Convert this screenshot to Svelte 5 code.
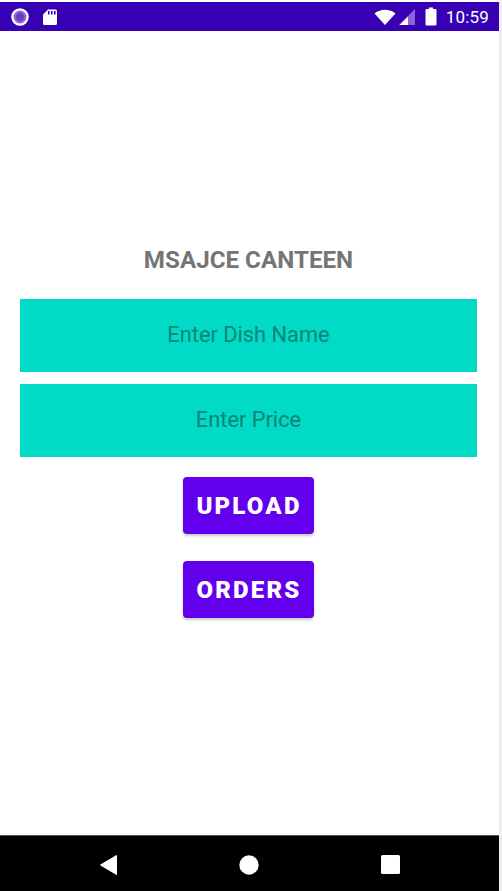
<script>
  const fields = ['Enter Dish Name', 'Enter Price'];
  const actions = ['UPLOAD', 'ORDERS'];
</script>

<div class="screen">
  <header class="status">
    <div class="left">
      <svg width="20" height="20" viewBox="0 0 20 20"><circle cx="10" cy="10" r="7.6" fill="#8a66d8" stroke="#fff" stroke-width="2.4"/><circle cx="10" cy="10" r="4.2" fill="#6a3cc4"/></svg>
      <svg width="16" height="18" viewBox="0 0 16 18"><path d="M6 1.5H13.5A1.5 1.5 0 0 1 15 3V15.5A1.5 1.5 0 0 1 13.5 17H2.5A1.5 1.5 0 0 1 1 15.5V6.5Z" fill="#fff"/><path d="M6 3h1.6v3.4H6zM9 3h1.6v3.4H9zM12 3h1.6v3.4H12z" fill="#3700b3"/></svg>
    </div>
    <div class="right">
      <svg class="wifi" width="22" height="16" viewBox="0 0 22 16"><path d="M0.5 4.5C6.5 -0.5 15.5 -0.5 21.5 4.5L11 16Z" fill="#fff"/></svg>
      <svg width="18" height="18" viewBox="0 0 18 18"><path d="M17 1V17H1Z" fill="#8a66d8"/><path d="M10 8.5V17H1.5Z" fill="#fff"/></svg>
      <svg class="batt" width="12" height="19" viewBox="0 0 12 19"><path d="M4 0.5H8V2H10.5A1 1 0 0 1 11.5 3V17.5A1 1 0 0 1 10.5 18.5H1.5A1 1 0 0 1 0.5 17.5V3A1 1 0 0 1 1.5 2H4Z" fill="#fff"/></svg>
      <span class="time">10:59</span>
    </div>
  </header>

  <main class="content">
    <h1>MSAJCE CANTEEN</h1>
    {#each fields as f}
      <div class="field"><span>{f}</span></div>
    {/each}
    {#each actions as a}
      <button>{a}</button>
    {/each}
  </main>

  <nav class="nav">
    <svg width="18" height="20" viewBox="0 0 18 20"><path d="M16.5 0.5V19.5L0.5 10Z" fill="#fff" stroke="#fff" stroke-linejoin="round"/></svg>
    <svg width="20" height="20" viewBox="0 0 20 20"><circle cx="10" cy="10" r="9.7" fill="#fff"/></svg>
    <svg width="19" height="19" viewBox="0 0 19 19"><rect width="19" height="19" rx="1.5" fill="#fff"/></svg>
  </nav>
</div>

<style>
  :global(body) {
    margin: 0;
    background: #fff;
  }
  .screen {
    width: 499px;
    height: 891px;
    display: flex;
    flex-direction: column;
    overflow: hidden;
    font-family: Roboto, sans-serif;
    border-right: 3px solid #eeeeee;
  }
  .status {
    height: 29px;
    margin-top: 2px;
    background: #3700b3;
    display: flex;
    justify-content: space-between;
    align-items: center;
    padding: 0 10px 0 10px;
    color: #fff;
  }
  .left, .right {
    display: flex;
    align-items: center;
  }
  .left { gap: 12px; }
  .right { gap: 1px; }
  .wifi { margin-right: 1px; }
  .batt { margin-left: 8px; }
  .time {
    margin-left: 8px;
    font-size: 17px;
    letter-spacing: 0.2px;
  }
  .content {
    flex: 1;
    display: flex;
    flex-direction: column;
    align-items: center;
    padding: 215.5px 22px 0 20px;
  }
  h1 {
    margin: 0 0 25.5px;
    font-size: 24.2px;
    line-height: 27px;
    font-weight: 700;
    color: #757575;
    white-space: nowrap;
  }
  .field {
    align-self: stretch;
    height: 73px;
    margin-bottom: 12px;
    background: #00dac6;
    color: #0a8578;
    font-size: 21.8px;
    display: flex;
    align-items: center;
    justify-content: center;
  }
  .field span {
    margin-bottom: 3px;
  }
  button {
    width: 131px;
    height: 57px;
    margin: 8px 0 18.5px;
    border: 0;
    border-radius: 4px;
    background: #6200ee;
    color: #fff;
    font: 900 24px Roboto, sans-serif;
    letter-spacing: 2.2px;
    padding: 1px 0 0 1px;
    box-shadow: 0 2px 3px rgba(0, 0, 0, 0.22);
  }
  .nav {
    height: 53px;
    padding-top: 2px;
    border-top: 1px solid #555;
    background: #000;
    display: flex;
    justify-content: center;
    align-items: center;
    gap: 121.5px;
  }
</style>
